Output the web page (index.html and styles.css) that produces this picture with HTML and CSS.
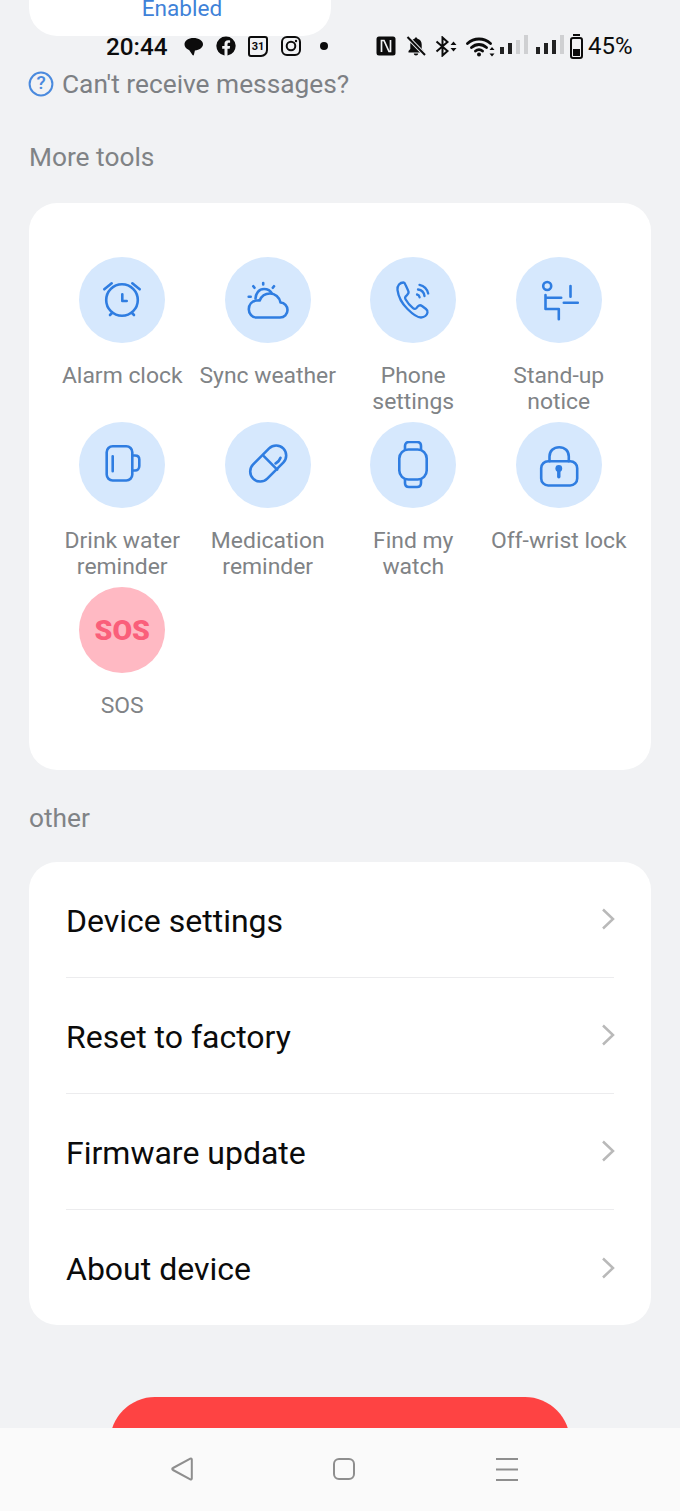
FILE: index.html
```html
<!DOCTYPE html>
<html lang="en">
<head>
<meta charset="utf-8">
<title>More tools</title>
<link rel="stylesheet" href="styles.css">
</head>
<body>
<div class="page">
  <div class="top-card"><span class="enabled">Enabled</span></div>

  <div class="help-row">
    <svg class="help-icon" viewBox="0 0 26 26"><circle cx="13" cy="13" r="11.4"/></svg>
    <span class="help-q">?</span>
    <span class="help-text">Can't receive messages?</span>
  </div>

  <h2 class="section-title first">More tools</h2>
  <section class="card tools">
    <div class="tool">
      <div class="disc"><svg class="ico" viewBox="0 0 48 48"><circle cx="24" cy="24" r="15.8"/><path d="M6.3 13.3 13.7 7.3M41.7 13.3 34.3 7.3M24.3 18.3V25h4.4M14 37 12 39M34 37 36 39"/></svg></div>
      <div class="tool-label">Alarm clock</div>
    </div>
    <div class="tool">
      <div class="disc"><svg class="ico" viewBox="0 0 48 48"><path d="M12.5 41.5H36c4.300 0 7.500-3.200 7.500-7.500 0-4-3-7.200-7-7.500C35.500 21 31 17.500 26 17.500c-4.700 0-8.700 2.800-10.300 7-.500-.100-1.200-.100-1.700 0H12.500C8 25 4.800 28.500 4.800 33.200c0 4.500 3.400 8.300 7.700 8.300z"/><path d="M11.500 22.500C11.600 17.500 15 13 20 13c3.500 0 6.500 1.700 8 4.500M19.200 7V8.500M9.300 10.200l1.200 1.600M30 10.200l-1.200 1.600M4.700 20.700h2"/></svg></div>
      <div class="tool-label">Sync weather</div>
    </div>
    <div class="tool">
      <div class="disc"><svg class="ico thin" viewBox="0 0 48 48"><path d="M14.500 6.500c-3.500 0-6.500 3-6 7.500 1 8 5 14 10 19s9 8.500 13.500 8.500c3.500 0 6-2.500 6.500-5 .3-1.500-.5-2.700-1.500-3.500l-4-3c-1.300-1-3-.8-4 .3L27.500 32c-1 1-2.500 1-3.500.2-3-2.500-5.500-5.500-7.500-9-.6-1.200-.3-2.500.7-3.300L18.500 18.400c1-1 1.300-2.500.7-3.700L16.700 9.200c-.5-1.200-1.700-2.700-2.200-2.700z"/><path d="M28 18.500c1.500.3 2.300 1.300 2.600 2.800M29 13.500c3.500.5 6 3 6.500 6.500M30.500 8.800c4.600 1 7.700 4.200 8.700 8.700"/></svg></div>
      <div class="tool-label">Phone settings</div>
    </div>
    <div class="tool">
      <div class="disc"><svg class="ico" viewBox="0 0 48 48"><circle cx="12.200" cy="10" r="4"/><path d="M10.500 19V33H23.800V43.300M10.500 21.700H26.200M28.800 26.700H42.800M35.500 10V20.700"/></svg></div>
      <div class="tool-label">Stand-up notice</div>
    </div>
    <div class="tool">
      <div class="disc"><svg class="ico" viewBox="0 0 48 48"><rect x="8.700" y="5.200" width="25.600" height="34.300" rx="6"/><path d="M34.300 14.500h2.700c2.500 0 4.300 1.500 4.300 4v6.500c0 2.700-1.800 4.500-4.300 4.500h-2.700M14.700 15.200V30.200"/></svg></div>
      <div class="tool-label">Drink water reminder</div>
    </div>
    <div class="tool">
      <div class="disc"><svg class="ico" viewBox="0 0 48 48"><rect x="2.900" y="12.500" width="42.600" height="20" rx="10" transform="rotate(-45 24.200 22.500)"/><path d="M19.800 15.200 33.200 28.600M31.500 22.500c2.200-1 4-3 5-5.700"/></svg></div>
      <div class="tool-label">Medication reminder</div>
    </div>
    <div class="tool">
      <div class="disc"><svg class="ico" viewBox="0 0 48 48"><rect x="10.300" y="8.500" width="27.400" height="30" rx="9"/><path d="M16 8.500V5c0-2.500 1.500-4 4-4h8c2.500 0 4 1.500 4 4V8.500M16 38.500V42c0 2.500 1.500 4 4 4h8c2.500 0 4-1.500 4-4V38.500"/></svg></div>
      <div class="tool-label">Find my watch</div>
    </div>
    <div class="tool">
      <div class="disc"><svg class="ico" viewBox="0 0 48 48"><rect x="6.200" y="20.200" width="36" height="24.300" rx="7"/><path d="M14.500 20.200V15.500c0-5.500 4-9.300 9.700-9.300s9.600 3.800 9.600 9.300v4.700"/><circle class="solid" cx="23.800" cy="27.500" r="3.400"/><path class="stem" d="M23.800 28V35.800"/></svg></div>
      <div class="tool-label">Off-wrist lock</div>
    </div>
    <div class="tool">
      <div class="disc sos"><span class="sos-text">SOS</span></div>
      <div class="tool-label">SOS</div>
    </div>
  </section>

  <h2 class="section-title second">other</h2>
  <section class="card list">
    <div class="list-row"><span class="row-text">Device settings</span><svg class="chev" viewBox="0 0 14 24"><path d="M2 2.500 12 12 2 21.500"/></svg></div>
    <div class="list-row"><span class="row-text">Reset to factory</span><svg class="chev" viewBox="0 0 14 24"><path d="M2 2.500 12 12 2 21.500"/></svg></div>
    <div class="list-row"><span class="row-text">Firmware update</span><svg class="chev" viewBox="0 0 14 24"><path d="M2 2.500 12 12 2 21.500"/></svg></div>
    <div class="list-row"><span class="row-text">About device</span><svg class="chev" viewBox="0 0 14 24"><path d="M2 2.500 12 12 2 21.500"/></svg></div>
  </section>

  <div class="red-button"></div>
</div>

<div class="status-bar">
  <span class="clock">20:44</span>
  <svg class="st st-chat" viewBox="0 0 19 19"><path d="M9.500 1C4.500 1 .5 3.500.5 7.300c0 2.400 1.500 4.200 4 5.400.8.400 1.200 1 2 2.300l2 3c.5.700 1.200.6 1.400-.2l1-4.300c4.500-.5 8.100-2.800 8.100-6.200C19 3.500 14.500 1 9.500 1z"/></svg>
  <svg class="st st-fb" viewBox="0 0 20 20"><path fill-rule="evenodd" d="M10 .5a9.500 9.500 0 0 0-1.500 18.900v-6.700H6.200V10h2.300V8c0-2.400 1.400-3.700 3.600-3.700 1 0 2 .2 2 .2v2.300H13c-1.200 0-1.500.7-1.500 1.500V10h2.600l-.4 2.700h-2.200v6.700A9.500 9.500 0 0 0 10 .5z"/></svg>
  <span class="st-cal">31</span>
  <svg class="st st-ig" viewBox="0 0 20 20"><rect class="line" x="1" y="1" width="18" height="18" rx="5"/><circle class="line" cx="10" cy="10" r="4.300"/><circle cx="15" cy="5" r="1.200"/></svg>
  <span class="st-dot"></span>
  <svg class="st st-n" viewBox="0 0 20 20"><rect x=".5" y=".5" width="19" height="19" rx="2.500"/><path class="cut" d="M5.500 16V4.500H8L13 15.500H14.500V4"/></svg>
  <svg class="st st-bell" viewBox="0 0 20 20"><path d="M10 1.500c-.8 0-1.300.5-1.400 1.300C5.800 3.500 4.300 5.700 4.300 8.500V13L2.500 15v1.500h15V15l-1.800-2V8.500c0-2.800-1.500-5-4.300-5.700-.1-.8-.6-1.300-1.400-1.300zM7.800 17.500h4.400c0 1.200-1 2-2.200 2s-2.200-.8-2.200-2z"/><path class="cut wide" d="M1 .5 19.500 19.500"/><path class="line" d="M1.500 1 19 19"/></svg>
  <svg class="st st-bt" viewBox="0 0 23 21"><path class="line" d="M1.500 5.500 12.500 15 7.500 19.500V1.500L12.500 6 1.500 15.500"/><path d="M18.500 5.500 21.500 9h-6zM18.500 15.500 15.500 12h6z"/></svg>
  <svg class="st st-wifi" viewBox="0 0 29 21"><path class="line wide" d="M1.500 7.500C8 1.500 18 1.500 24.500 7.500M5.500 11.500C10 7.500 16 7.500 20.500 11.500M9.500 15C11.500 13.300 14.500 13.300 16.500 15"/><circle cx="13" cy="18.500" r="2"/><path d="M26 11 28.500 14h-5zM26 20.500 23.500 17.500h5z"/></svg>
  <span class="bars"><i class="b1"></i><i class="b2"></i><i class="b3 off"></i><i class="b4 off"></i></span>
  <span class="bars second-bars"><i class="b1"></i><i class="b2"></i><i class="b3"></i><i class="b4 off"></i></span>
  <span class="battery"><span class="cap"></span><span class="cell"><span class="level"></span></span></span>
  <span class="percent">45%</span>
</div>

<nav class="nav-bar">
  <svg class="nav-ico" viewBox="0 0 24 24"><path d="M21.800 2.500c0-1-.7-1.300-1.500-.9L3 11c-1 .5-1 1.500 0 2l17.300 9.400c.8.400 1.500.1 1.500-.9z"/></svg>
  <svg class="nav-ico" viewBox="0 0 24 24"><rect x="2" y="2" width="20" height="20" rx="5"/></svg>
  <svg class="nav-ico" viewBox="0 0 24 24"><path d="M1 2H23M1 12.500H23M1 23H23"/></svg>
</nav>
</body>
</html>
```
FILE: styles.css
```css
* { box-sizing: border-box; }
html, body { margin: 0; padding: 0; }
body {
  width: 680px;
  height: 1511px;
  overflow: hidden;
  background: #f1f2f4;
  font-family: Roboto, "Liberation Sans", sans-serif;
  position: relative;
}
.page { height: 1511px; overflow: hidden; }

.top-card {
  width: 302px;
  height: 36px;
  margin-left: 29px;
  padding-left: 4px;
  background: #fff;
  border-radius: 0 0 28px 28px;
  display: flex;
  justify-content: center;
  align-items: flex-end;
  overflow: hidden;
}
.enabled {
  color: #3f82d8;
  font-size: 22.6px;
  line-height: 26px;
  margin-bottom: 14px;
}

.help-row {
  position: relative;
  display: flex;
  align-items: center;
  height: 32px;
  margin: 32px 0 0 28px;
}
.help-icon { width: 26px; height: 26px; margin-right: 8px; fill: none; stroke: #4a8ade; stroke-width: 2; }
.help-q {
  position: absolute;
  left: 0;
  top: 0;
  width: 26px;
  text-align: center;
  font-size: 19px;
  line-height: 30px;
  font-weight: 500;
  color: #4a8ade;
}
.help-text { font-size: 26.3px; line-height: 32px; color: #7d8084; }

.section-title {
  margin: 0 0 0 29px;
  font-size: 26.3px;
  font-weight: 400;
  line-height: 32px;
  color: #808386;
}
.section-title.first { margin-top: 41px; margin-bottom: 30px; }
.section-title.second { margin-top: 32px; margin-bottom: 28px; }

.card {
  width: 622px;
  margin-left: 29px;
  background: #fff;
  border-radius: 28px;
}
.tools {
  height: 567px;
  padding: 54px 20.5px 0;
  display: grid;
  grid-template-columns: repeat(4, 145.5px);
  grid-auto-rows: 165px;
}
.tool { display: flex; flex-direction: column; align-items: center; }
.disc {
  width: 86px;
  height: 86px;
  flex: none;
  border-radius: 50%;
  background: #d6e8fd;
  display: flex;
  align-items: center;
  justify-content: center;
}
.disc.sos { background: #ffb9c3; }
.sos-text {
  font-weight: 900;
  font-size: 28.500px;
  color: #fa5f7a;
}
.ico {
  width: 48px;
  height: 48px;
  fill: none;
  stroke: #2f7de1;
  stroke-width: 2.600;
  stroke-linecap: round;
  stroke-linejoin: round;
}
.ico.thin { stroke-width: 2.300; }
.ico .solid { fill: #2f7de1; stroke: none; }
.ico .stem { stroke-width: 3.400; }
.tool-label {
  width: 145px;
  margin-top: 20px;
  text-align: center;
  font-size: 22.9px;
  line-height: 26px;
  color: #808386;
}

.list { height: 463px; padding: 0 37px; }
.list-row {
  height: 116px;
  display: flex;
  align-items: center;
  justify-content: space-between;
  font-size: 32px;
  color: #0b0b0b;
  border-bottom: 1px solid #ececee;
}
.list-row:last-child { border-bottom: 0; }
.row-text { margin-top: 2px; }
.chev { width: 14px; height: 24px; fill: none; stroke: #b9b9b9; stroke-width: 2.500; margin: -1px -1px 0 0; }

.red-button {
  width: 460px;
  height: 90px;
  margin: 72px 0 0 110px;
  background: #fe4343;
  border-radius: 45px;
}

.status-bar {
  position: absolute;
  left: 106px;
  top: 32px;
  height: 28px;
  display: flex;
  align-items: center;
  color: #0c0c0c;
}
.clock { font-size: 24.300px; font-weight: 500; width: 78px; }
.percent { font-size: 24px; margin-left: 5px; }
.st { display: block; flex: none; fill: #0c0c0c; }
.st .line { fill: none; stroke: #0c0c0c; stroke-width: 2; }
.st .line.wide { stroke-width: 2.800; stroke-linecap: round; }
.st .cut { fill: none; stroke: #f1f2f4; stroke-width: 1.700; }
.st .cut.wide { stroke-width: 4; }
.st-chat { width: 19px; height: 19px; }
.st-fb { width: 20px; height: 20px; margin-left: 13px; }
.st-cal {
  width: 20px;
  height: 21px;
  margin-left: 12px;
  border: 2px solid #0c0c0c;
  border-radius: 3px 3px 7px 3px;
  font-size: 11px;
  font-weight: 700;
  line-height: 17px;
  text-align: center;
}
.st-ig { width: 20px; height: 20px; margin-left: 13px; }
.st-dot { width: 8px; height: 8px; margin-left: 19px; border-radius: 50%; background: #0c0c0c; }
.st-n { width: 20px; height: 20px; margin-left: 48px; }
.st-bell { width: 20px; height: 20px; margin-left: 10px; }
.st-bt { width: 23px; height: 21px; margin-left: 9px; }
.st-wifi { width: 29px; height: 21px; margin-left: 8px; }
.bars { display: flex; align-items: flex-end; gap: 4px; height: 19px; margin: -3px 0 0 5px; }
.second-bars { margin-left: 8px; }
.bars i { display: block; width: 4px; background: #222; }
.bars i.off { background: #cfd0d2; }
.bars .b1 { height: 7px; }
.bars .b2 { height: 11px; }
.bars .b3 { height: 14px; }
.bars .b4 { height: 19px; }
.battery { width: 13px; height: 25px; margin-left: 6px; display: flex; flex-direction: column; align-items: center; }
.cap { width: 7px; height: 2px; background: #0c0c0c; margin-bottom: 1px; }
.cell {
  width: 13px;
  height: 22px;
  border: 2px solid #0c0c0c;
  border-radius: 3px;
  padding: 1px;
  display: flex;
  align-items: flex-end;
}
.level { display: block; width: 100%; height: 7px; background: #0c0c0c; }

.nav-bar {
  position: absolute;
  left: 0;
  bottom: 0;
  width: 680px;
  height: 83px;
  background: #fafafa;
  padding: 29px 161.500px 0 170px;
  display: flex;
  justify-content: space-between;
  align-items: flex-start;
}
.nav-ico { width: 24px; height: 24px; fill: none; stroke: #8e8e8e; stroke-width: 2; stroke-linejoin: round; }
```
